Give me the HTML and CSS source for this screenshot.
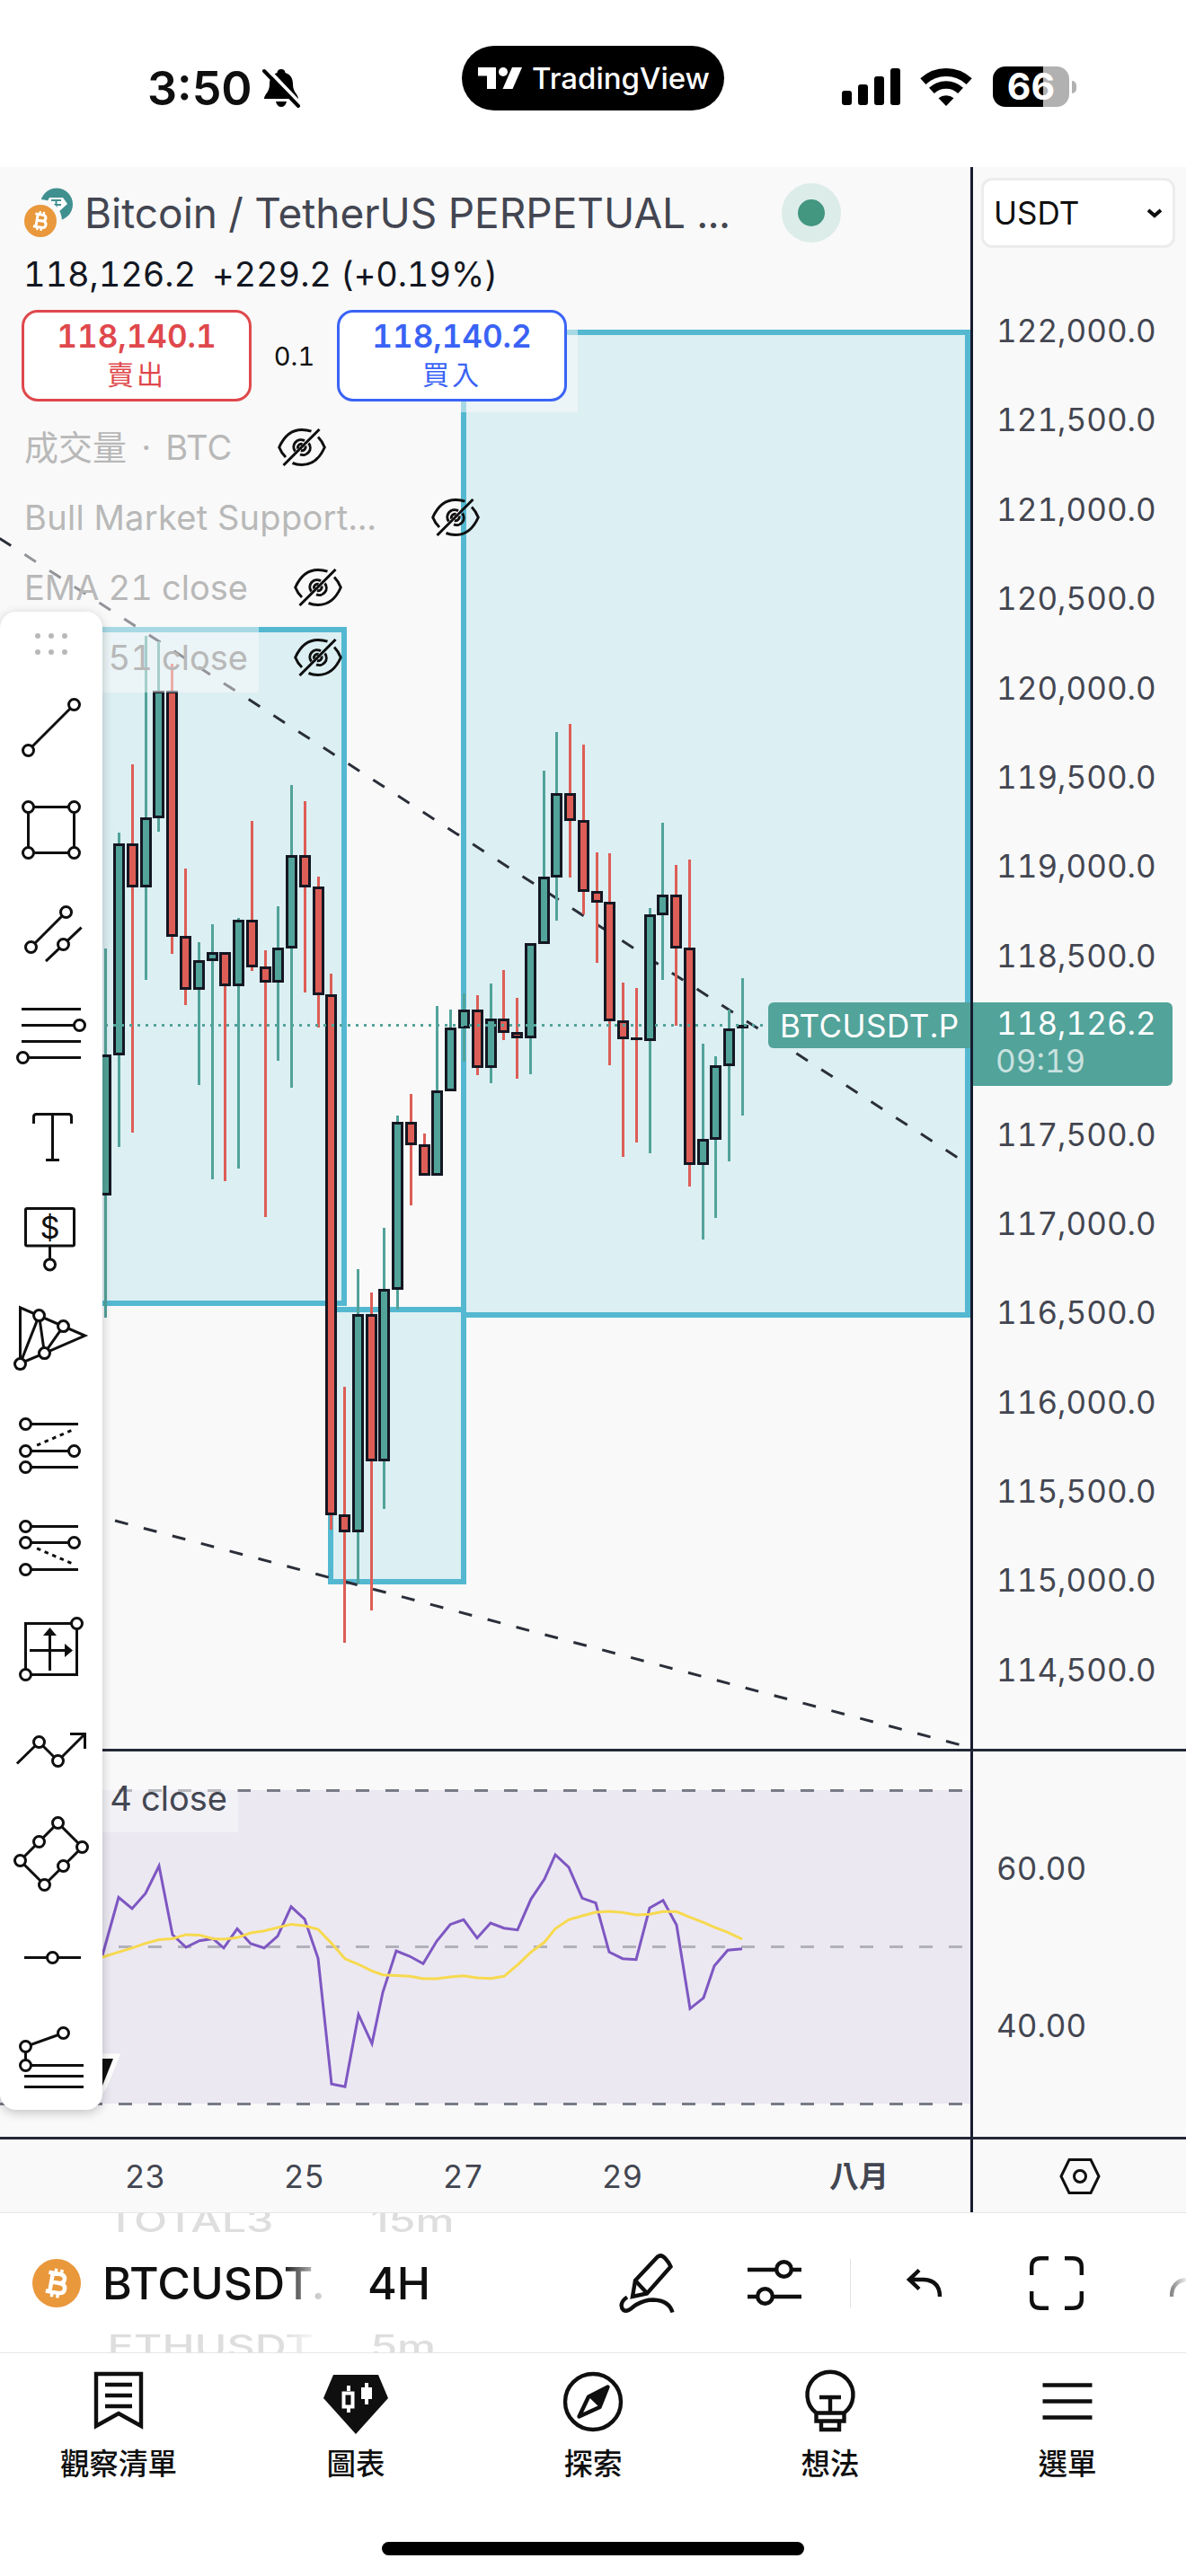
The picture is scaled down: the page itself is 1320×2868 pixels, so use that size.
FILE: index.html
```html
<!DOCTYPE html>
<html lang="zh-Hant">
  <head>
    <meta charset="UTF-8" />
    <meta name="viewport" content="width=device-width, initial-scale=1.0" />
    <title>TradingView - BTCUSDT.P</title>
    <link rel="stylesheet" href="styles.css">
  </head>
  <body>
    <header class="status-bar">
      <div class="status-left">
        <span class="clock">3:50</span>
        <svg class="bell" width="44" height="46" viewBox="0 0 44 46">
          <path d="M21 2c-3 0-4.500 2-4.500 4C10 8 8 13 8 19c0 9-6 11-6 16h38c0-5-6-7-6-16 0-6-2-11-8.500-13 0-2-1.500-4-4.500-4z" />
          <path d="M15 38h12c-1 4-3 6-6 6s-5-2-6-6z" />
          <path class="bell-gap" d="M5 1l38 40" />
          <path class="bell-slash" d="M2 4l38 39" />
        </svg>
      </div>
      <div class="island">
        <svg width="50" height="24" viewBox="0 0 50 24" fill="#fff">
          <path d="M0 0h20v24H10V9.500H0z" />
          <circle cx="28" cy="5" r="5" />
          <path d="M38 0h11L38.500 24h-11z" />
        </svg>
        <span>TradingView</span>
      </div>
      <div class="status-right">
        <svg width="66" height="42" viewBox="0 0 66 42">
          <rect x="0" y="25" width="11" height="16" rx="3" />
          <rect x="18" y="18" width="11" height="23" rx="3" />
          <rect x="36" y="9" width="11" height="32" rx="3" />
          <rect x="54" y="0" width="11" height="41" rx="3" />
        </svg>
        <svg class="wifi" width="58" height="42" viewBox="0 0 58 42">
          <path d="M3.400 14.600A37.500 37.500 0 0 1 54.600 14.600" stroke-width="9" />
          <path d="M12.900 24.900A23.500 23.500 0 0 1 45.100 24.900" stroke-width="8.500" />
          <path class="wifi-dot" d="M29 42L20.500 33.200A13.500 13.500 0 0 1 37.500 33.200z" />
        </svg>
        <div class="battery"><span>66</span></div>
      </div>
    </header>

    <main class="chart">
      <section class="pane price-pane">
        <svg id="price" width="1080" height="1761" viewBox="0 186 1080 1761">
          <rect class="zone" x="3" y="701" width="380" height="750" />
          <rect class="zone" x="368" y="1458" width="148" height="303" />
          <rect class="zone" x="516" y="370" width="561" height="1094" />
          <path class="trend" d="M-0.400 599.400L1070 1291.500" />
          <path class="trend" d="M128 1693L1070 1943" />
          <g id="candles"></g>
          <path class="last-price" d="M0 1141.500H850" />
        </svg>
        <div class="legend">
          <div class="symbol-row">
            <svg width="56" height="56" viewBox="0 0 56 56">
              <circle cx="37" cy="18.500" r="18" fill="#419090" />
              <path d="M29 11h15l5 7-12 11-12-11z" fill="#fff" />
              <path d="M31 14h11M36.500 14v10M31 19h11" stroke="#419090" stroke-width="2" />
              <circle cx="19" cy="37" r="24" fill="#f9f9f9" />
              <use href="#btc" x="1" y="19" width="36" height="36" />
            </svg>
            <h1>Bitcoin / TetherUS PERPETUAL ...</h1>
            <i class="market-open"></i>
          </div>
          <div class="quote-row"><span>118,126.2</span><span>+229.2 (+0.19%)</span></div>
          <div class="trade-row">
            <button class="trade sell"><b>118,140.1</b><span>賣出</span></button>
            <span class="spread">0.1</span>
            <button class="trade buy"><b>118,140.2</b><span>買入</span></button>
          </div>
          <div class="study"><span class="study-name vol">成交量 · BTC</span><svg class="eye"><use href="#eye" /></svg></div>
          <div class="study"><span class="study-name bull">Bull Market Support...</span><svg class="eye"><use href="#eye" /></svg></div>
          <div class="study"><span class="study-name">EMA 21 close</span><svg class="eye"><use href="#eye" /></svg></div>
          <div class="study"><span class="study-name">EMA 51 close</span><svg class="eye"><use href="#eye" /></svg></div>
        </div>
        <span class="symbol-tag">BTCUSDT.P</span>
      </section>

      <aside class="axis price-axis">
        <div class="currency">
          <span>USDT</span>
          <svg width="18" height="11" viewBox="0 0 18 11"><path d="M2 2l7 6 7-6" /></svg>
        </div>
        <ul class="scale">
          <li>122,000.0</li>
          <li>121,500.0</li>
          <li>121,000.0</li>
          <li>120,500.0</li>
          <li>120,000.0</li>
          <li>119,500.0</li>
          <li>119,000.0</li>
          <li>118,500.0</li>
          <li></li>
          <li>117,500.0</li>
          <li>117,000.0</li>
          <li>116,500.0</li>
          <li>116,000.0</li>
          <li>115,500.0</li>
          <li>115,000.0</li>
          <li>114,500.0</li>
        </ul>
        <div class="price-tag"><span>118,126.2</span><span class="countdown">09:19</span></div>
      </aside>

      <section class="pane rsi-pane">
        <svg width="1080" height="429" viewBox="0 1950 1080 429">
          <rect x="0" y="1993" width="1080" height="349" fill="#ebe8f2" />
          <path class="band" d="M0 1993.500H1080M0 2342.500H1080" />
          <path class="band mid" d="M0 2167.500H1080" />
          <polyline class="rsi" points="114,2177 132,2112.500 147,2125 162,2108 177,2077.500 192,2154 207,2168 222,2160.700 237,2158.400 249,2168.800 264,2147.500 279,2164 294,2168.800 309,2155.600 324,2122.800 339,2136.600 354,2180.300 369,2320.300 384,2323.200 399,2242.800 414,2275.300 426,2218.300 441,2172 456,2178 471,2186.300 486,2161.300 501,2142.700 516,2137.300 531,2157.700 546,2141 561,2146.700 576,2148.700 591,2114.300 606,2092 618,2065 633,2079 648,2113.300 663,2118.700 678,2173.300 693,2180.700 708,2181.700 723,2124.300 738,2115.700 753,2143.300 768,2236.300 783,2224.300 795,2188.700 810,2171.300 826,2169.700" />
          <polyline class="rsi-ma" points="114,2179 132,2173.400 147,2168.800 162,2163.600 177,2159.600 192,2158.500 207,2153.900 222,2154.400 237,2158.400 249,2159 264,2157.300 279,2152 294,2149.800 324,2142.400 339,2144 354,2148 369,2163.600 384,2180.800 399,2187 414,2194.300 426,2198.700 456,2200.300 471,2203 486,2203 501,2201 516,2199.700 531,2202 546,2202.700 561,2200.300 576,2187.700 591,2173.300 606,2162.300 618,2147.300 633,2137.300 648,2133 663,2129 678,2128 693,2129.300 708,2132 723,2131.300 738,2128.300 753,2128.300 768,2134.700 783,2140.300 795,2145.700 810,2151.300 826,2159" />
          <path d="M90 2292h36l-12 30-14 18z" fill="#0f0f0f" stroke="#fcfcfc" stroke-width="11" paint-order="stroke" />
        </svg>
        <span class="rsi-name"><span class="rsi-label">RSI 1</span>4 close</span>
      </section>
      <aside class="axis rsi-axis"><span>60.00</span><span>40.00</span></aside>

      <div class="time-axis">
        <span>23</span><span>25</span><span>27</span><span>29</span><b>八月</b>
      </div>
      <div class="axis-settings">
        <svg width="48" height="44" viewBox="0 0 48 44">
          <path d="M12 3.500h24L45 22l-9 18.500H12L3 22z" />
          <circle cx="24" cy="22" r="6.500" />
        </svg>
      </div>

      <nav class="draw-tools">
        <div class="handle"><i></i><i></i><i></i><i></i><i></i><i></i></div>
        <svg viewBox="0 0 28 28"><path d="M7 21L21 7" /><circle cx="5.500" cy="22.500" r="2" /><circle cx="22.500" cy="5.500" r="2" /></svg>
        <svg viewBox="0 0 28 28"><path d="M5.500 5.500h17v17h-17z" /><circle cx="5.500" cy="5.500" r="2" /><circle cx="22.500" cy="5.500" r="2" /><circle cx="5.500" cy="22.500" r="2" /><circle cx="22.500" cy="22.500" r="2" /></svg>
        <svg viewBox="0 0 28 28"><path d="M6.500 19.500l13-13M12 24.700l13.200-12.500" /><circle cx="6.500" cy="19.500" r="2" /><circle cx="19.500" cy="6.500" r="2" /><circle cx="18.500" cy="18.500" r="2" /></svg>
        <svg viewBox="0 0 28 28"><path d="M3 4.500h22M3 10.500h20M3 16.500h22M4 22.500h21" /><circle cx="24.500" cy="10.500" r="2" /><circle cx="3.500" cy="22.500" r="2" /></svg>
        <svg viewBox="0 0 28 28"><path d="M7.500 9V6.500q0-1 1-1h12q1 0 1 1V9M14.500 5.500v17M12 22.500h5" /></svg>
        <svg viewBox="0 0 28 28"><rect x="4.500" y="2.500" width="18" height="13.800" rx=".5" /><path d="M13.500 16.500v5" /><text x="13.500" y="13.700">$</text><circle cx="13.500" cy="23.300" r="2" /></svg>
        <svg viewBox="0 0 28 28"><path d="M2.500 22V1.300L26.500 11.700 11.500 18.200 2.500 22 9.500 4.200l2 14 7-10" /><circle cx="9.500" cy="4.200" r="2" /><circle cx="18.500" cy="8.200" r="2" /><circle cx="11.500" cy="18.200" r="2" /><circle cx="2.500" cy="22.200" r="2" /></svg>
        <svg viewBox="0 0 28 28"><path d="M4.500 6.500H24M4.500 16.500h18M4.500 22.500H24" /><path class="dots" d="M8.700 14.400l13.800-6" /><circle cx="4.500" cy="6.500" r="2" /><circle cx="4.500" cy="16.500" r="2" /><circle cx="4.500" cy="22.500" r="2" /><circle cx="22.500" cy="16.500" r="2" /></svg>
        <svg viewBox="0 0 28 28"><path d="M4.500 6.500H24M4.500 12.500h18M4.500 22.500H24" /><path class="dots" d="M8.700 14.600l13.800 6" /><circle cx="4.500" cy="6.500" r="2" /><circle cx="4.500" cy="12.500" r="2" /><circle cx="4.500" cy="22.500" r="2" /><circle cx="22.500" cy="12.500" r="2" /></svg>
        <svg viewBox="0 0 28 28"><path d="M4.500 4.500h19v19h-19zM6 14.500h14M13.500 22V8" /><path class="solid" d="M11 9l2.500-3L16 9zM19 12l3 2.500-3 2.500z" /><circle cx="23.500" cy="4.500" r="2" /><circle cx="4.500" cy="23.500" r="2" /></svg>
        <svg viewBox="0 0 28 28"><path d="M1.300 18.500l8.200-8 7 7L26.500 7.500M21 7.500h5.500V13" /><circle cx="9.500" cy="10.500" r="2" /><circle cx="16.500" cy="17.500" r="2" /></svg>
        <svg viewBox="0 0 28 28"><path d="M16.500 2.500l-14 14 9 9 14-14z" /><circle cx="16.500" cy="2.500" r="2" /><circle cx="9.500" cy="9.500" r="2" /><circle cx="2.500" cy="16.500" r="2" /><circle cx="11.500" cy="25.500" r="2" /><circle cx="18.500" cy="18.500" r="2" /><circle cx="25.500" cy="11.500" r="2" /></svg>
        <svg viewBox="0 0 28 28"><path d="M4 14.500h21" /><circle cx="14.500" cy="14.500" r="2" /></svg>
        <svg viewBox="0 0 28 28"><path d="M18.500 4.500l-14 5v7H26M4 20.500h22M4 24.500h22" /><circle cx="18.500" cy="4.500" r="2" /><circle cx="4.500" cy="9.500" r="2" /><circle cx="4.500" cy="16.500" r="2" /></svg>
      </nav>
    </main>

    <div class="toolbar">
      <svg class="coin" width="54" height="54"><use href="#btc" /></svg>
      <div class="wheel symbols"><span class="off">TOTAL3</span><span class="on">BTCUSDT.</span><span class="off">ETHUSDT</span></div>
      <div class="wheel intervals"><span class="off">15m</span><span class="on">4H</span><span class="off">5m</span></div>
      <svg class="icon" width="62" height="68" viewBox="0 0 62 68">
        <path d="M15 49l3-18L43 4.500q4-3 8.500 2t6 9L31 45.500z" />
        <path d="M18 31l13 14" />
        <path d="M9 49.500c-7 4.500-8 11-4 14.500 5 3 9-3 14-6 7-4 13-5.500 19-5.500 11 .5 19 5 21.500 14" />
      </svg>
      <svg class="icon sliders" width="60" height="54" viewBox="0 0 60 54">
        <path d="M0 12h32M49 12h11M0 42h11M28 42h32" />
        <circle cx="40.500" cy="11.500" r="8.300" />
        <circle cx="19.500" cy="41.500" r="8.300" />
      </svg>
      <i class="divider"></i>
      <svg class="icon undo" width="40" height="32" viewBox="0 0 40 32">
        <path d="M14 1.500L3 12l11 10.500M3 12h16q18 1 18 19" />
      </svg>
      <svg class="icon full" width="60" height="60" viewBox="0 0 60 60">
        <path d="M2.200 21V12q0-9.800 9.800-9.800h9M39 2.200h9q9.800 0 9.800 9.800v9M57.800 39v9q0 9.800-9.800 9.800h-9M21 57.800h-9q-9.800 0-9.800-9.800v-9" />
      </svg>
      <svg class="icon redo" width="18" height="32" viewBox="0 0 18 32">
        <linearGradient id="fade"><stop offset="0" stop-color="#888" /><stop offset="1" stop-color="#eee" /></linearGradient>
        <path d="M2 31q0-17 16-19" stroke="url(#fade)" />
      </svg>
    </div>

    <footer class="tabs">
      <a>
        <svg viewBox="0 0 72 72"><path d="M11 5h50v58L36 49 11 63zM21 17h30M21 29h30M21 41h30" /></svg>
        觀察清單
      </a>
      <a>
        <svg viewBox="0 0 72 72"><path class="solid" d="M11 6h50l11 26-36 40L0 32z" /><path class="candle" d="M28 18v6M28 42v6M22.500 26.500h10v15h-10zM48 15v24" /><path class="candle-full" d="M42 20h12v13H42z" /></svg>
        圖表
      </a>
      <a>
        <svg viewBox="0 0 72 72"><circle cx="36" cy="36" r="31" /><path d="M52.500 19.500L31 30.500 20.500 52.500 43.500 42z" stroke-linejoin="round" /><path class="solid" d="M54 18L30 29.500l14.500 14z" /></svg>
        探索
      </a>
      <a>
        <svg viewBox="0 0 72 72"><path d="M20.500 48.500A25.500 25.500 0 1 1 51.500 48.500M20.500 48.500h31v9h-31zM26 57.500h20v9.500H26zM24 31h24M36 31v17" /></svg>
        想法
      </a>
      <a>
        <svg viewBox="0 0 72 72"><path d="M8.500 17.500h55M8.500 35.500h55M8.500 53.500h55" /></svg>
        選單
      </a>
      <div class="home-bar"></div>
    </footer>

    <svg width="0" height="0" class="defs">
      <symbol id="btc" viewBox="0 0 54 54">
        <circle cx="27" cy="27" r="27" fill="#e9983c" />
        <g transform="rotate(10 27 27)" fill="none" stroke="#fff" stroke-width="4.500">
          <path d="M16.500 16.500H29q6 0 6 5t-6 5h-8.500H30q7 0 7 5.500T30 37.500H16.500M21 17v20" />
          <path d="M24 11v6M30.500 11v6M24 37v6M30.500 37v6" stroke-width="3.500" />
        </g>
      </symbol>
      <symbol id="eye" viewBox="0 0 54 42">
        <g fill="none" stroke="#0f0f0f" stroke-width="3">
          <path d="M37.500 3.200C34 2 31 1.500 27 1.500 15 1.500 7 9 1.700 21 3.500 25.500 5.800 29 9 32" />
          <path d="M45 9.500C48 12.500 50.500 16.500 52.300 21 47 33 39 40.500 27 40.500 23 40.500 20 40 16.500 38.500" />
          <path d="M19.500 25.500A8 8 0 0 1 30 13.800" />
          <path d="M34.500 16.500A8 8 0 0 1 25 28.800" />
          <path d="M22.500 22.500a4 4 0 0 1 5-5M31 19.500a4 4 0 0 1-5 5" />
          <path d="M6.500 41L46.500 1" />
        </g>
      </symbol>
    </svg>

    <script>
      // x, high, body top, body bottom, low, up
      const candles = [
        [117.5, 1056, 1174, 1331, 1467, 1],
        [132.5, 927, 939, 1175, 1277, 1],
        [147.5, 851, 939, 988, 1261, 0],
        [162.5, 708, 910, 988, 1091, 1],
        [176.5, 714, 769, 911, 926, 1],
        [191.5, 739, 769, 1043, 1062, 0],
        [206.5, 967, 1042, 1102, 1119, 0],
        [221.5, 1049, 1069, 1102, 1208, 1],
        [236.5, 1029, 1060, 1070, 1313, 1],
        [250.5, 1060, 1060, 1098, 1315, 0],
        [265.5, 1022, 1024, 1098, 1301, 1],
        [280.5, 914, 1024, 1077, 1081, 0],
        [295.5, 1058, 1076, 1094, 1355, 0],
        [309.5, 1009, 1055, 1094, 1181, 1],
        [324.5, 874, 952, 1056, 1211, 1],
        [339.5, 892, 952, 988, 1105, 0],
        [354.5, 976, 987, 1108, 1144, 0],
        [368.5, 1084, 1107, 1687, 1703, 0],
        [383.5, 1544, 1686, 1706, 1829, 0],
        [398.5, 1413, 1463, 1706, 1763, 1],
        [413.5, 1439, 1463, 1627, 1793, 0],
        [427.5, 1367, 1435, 1627, 1680, 1],
        [442.5, 1242, 1249, 1436, 1458, 1],
        [457.5, 1218, 1249, 1275, 1342, 0],
        [472.5, 1262, 1274, 1309, 1309, 0],
        [486.5, 1120, 1214, 1309, 1309, 1],
        [501.5, 1124, 1144, 1215, 1215, 1],
        [516.5, 1106, 1124, 1145, 1182, 1],
        [531.5, 1108, 1124, 1189, 1197, 0],
        [546.5, 1095, 1134, 1189, 1206, 1],
        [560.5, 1080, 1134, 1150, 1158, 0],
        [575.5, 1111, 1149, 1156, 1201, 0],
        [590.5, 1050, 1050, 1156, 1196, 1],
        [605.5, 858, 976, 1051, 1051, 1],
        [619.5, 815, 883, 977, 1025, 1],
        [634.5, 806, 883, 914, 977, 0],
        [649.5, 829, 913, 993, 1018, 0],
        [664.5, 949, 992, 1005, 1072, 0],
        [678.5, 950, 1004, 1137, 1186, 0],
        [693.5, 1094, 1136, 1157, 1288, 0],
        [708.5, 1100, 1155, 1158, 1272, 0],
        [723.5, 1011, 1018, 1159, 1284, 1],
        [737.5, 916, 996, 1019, 1091, 1],
        [752.5, 963, 996, 1056, 1142, 0],
        [767.5, 957, 1055, 1297, 1321, 0],
        [782.5, 1162, 1268, 1297, 1380, 1],
        [796.5, 1176, 1186, 1269, 1356, 1],
        [811.5, 1124, 1145, 1187, 1293, 1],
        [826.5, 1089, 1141, 1145, 1242, 1],
      ];

      let html = "";
      candles.forEach(([x, high, top, bottom, low, up]) => {
        const color = up ? "#52a39a" : "#dd5e56";
        html += `<rect x="${x - 1.5}" y="${high}" width="3" height="${low - high}" fill="${color}"/>`;
        html += `<rect x="${x - 6.5}" y="${top}" width="13" height="${bottom - top}" fill="#141722"/>`;
        if (bottom - top > 5) {
          html += `<rect x="${x - 3.5}" y="${top + 3}" width="7" height="${bottom - top - 6}" fill="${color}"/>`;
        }
      });
      document.getElementById("candles").innerHTML = html;
    </script>
  </body>
</html>
```
FILE: styles.css
```css
* {
  box-sizing: border-box;
}

body {
  margin: 0;
  width: 1320px;
  height: 2868px;
  overflow: hidden;
  background-color: #fff;
  color: #0f0f0f;
  font-family: Inter, "Noto Sans CJK TC", sans-serif;
}

svg {
  display: block;
  flex-shrink: 0;
}

.defs {
  position: absolute;
}

/* status bar */
.status-bar {
  display: grid;
  grid-template-columns: 514px 292px 514px;
  height: 186px;
  padding-top: 51px;
}

.status-left {
  display: flex;
  align-items: center;
  height: 94px;
  padding-left: 164px;
}

.clock {
  width: 128px;
  font-size: 52px;
  font-weight: 600;
}

.bell-gap {
  stroke: #fff;
  stroke-width: 4;
}

.bell-slash {
  stroke: #000;
  stroke-width: 4;
  stroke-linecap: round;
}

.island {
  display: flex;
  align-items: center;
  gap: 10px;
  height: 72px;
  padding-left: 18px;
  border-radius: 36px;
  background-color: #000;
  color: #fff;
  font-size: 33px;
  font-weight: 500;
}

.status-right {
  display: flex;
  align-items: center;
  height: 91px;
  padding-left: 131px;
}

.wifi {
  margin-left: 21px;
  fill: none;
  stroke: #000;
}

.wifi .wifi-dot {
  fill: #000;
  stroke: none;
}

.battery {
  position: relative;
  width: 85px;
  height: 45px;
  margin-left: 23px;
  border-radius: 14px;
  background: linear-gradient(to right, #000 56px, #b1b1b1 56px);
  color: #fff;
  font-size: 41px;
  font-weight: 700;
  line-height: 45px;
  text-align: center;
}

.battery::after {
  content: "";
  position: absolute;
  right: -8px;
  top: 16px;
  width: 5px;
  height: 14px;
  border-radius: 0 5px 5px 0;
  background-color: #b1b1b1;
}

/* chart */
.chart {
  position: relative;
  display: grid;
  grid-template-columns: 1080px 240px;
  grid-template-rows: 1764px 432px 81px;
  background-color: #f9f9f9;
  color: #434651;
  font-size: 35px;
  font-variant-numeric: tabular-nums;
}

.pane {
  position: relative;
  border-bottom: 3px solid #242838;
}

.zone {
  fill: #dceff3;
  stroke: #54b8d1;
  stroke-width: 6;
}

.trend {
  stroke: #2a2e39;
  stroke-width: 3;
  stroke-dasharray: 15 18;
}

.last-price {
  stroke: #52a39a;
  stroke-width: 3;
  stroke-dasharray: 3 6;
}

.legend {
  position: absolute;
  left: 15px;
  top: 0;
}

.symbol-row {
  display: flex;
  align-items: center;
  height: 102px;
  padding-left: 11px;
}

.symbol-row h1 {
  width: 776px;
  margin: 0 0 0 12px;
  font-size: 46px;
  font-weight: 400;
  white-space: nowrap;
}

.market-open {
  width: 66px;
  height: 66px;
  border: 18px solid #dcece9;
  border-radius: 50%;
  background-color: #439680;
}

.quote-row {
  display: flex;
  gap: 18px;
  height: 45px;
  padding-left: 11px;
  color: #131722;
  font-size: 38px;
  letter-spacing: -0.1px;
  line-height: 34px;
}

.trade-row {
  display: flex;
  align-items: center;
  width: 628px;
  height: 126px;
  padding-left: 9px;
  background-color: rgba(249, 249, 249, 0.5);
}

.trade {
  display: flex;
  flex-direction: column;
  align-items: center;
  width: 256px;
  height: 102px;
  padding: 4px 0 0;
  border: 3px solid;
  border-radius: 18px;
  background-color: #fff;
  font-family: inherit;
  font-variant-numeric: tabular-nums;
}

.trade b {
  font-size: 35px;
  font-weight: 600;
  line-height: 44px;
}

.trade span {
  font-size: 30px;
  line-height: 42px;
  letter-spacing: 3px;
}

.sell {
  color: #df484c;
}

.buy {
  color: #3a63f5;
}

.spread {
  width: 95px;
  color: #0f0f0f;
  font-size: 29px;
  text-align: center;
}

.study {
  display: flex;
  align-items: center;
  height: 78px;
}

.study-name {
  width: 273px;
  padding-left: 12px;
  background-color: rgba(249, 249, 249, 0.5);
  color: #b8b8b8;
  font-size: 38px;
  line-height: 78px;
  white-space: nowrap;
}

.study-name.vol {
  width: 255px;
  word-spacing: 6px;
}

.study-name.bull {
  width: 426px;
  letter-spacing: 0.3px;
}

.eye {
  width: 54px;
  height: 42px;
  margin-left: 39px;
}

.symbol-tag {
  position: absolute;
  right: 0;
  top: 930px;
  width: 225px;
  height: 51px;
  padding-left: 13px;
  border-radius: 6px 0 0 6px;
  background-color: #52a39a;
  color: #fff;
  line-height: 52px;
  letter-spacing: 0.5px;
}

.axis {
  position: relative;
  border-left: 3px solid #181c30;
  border-bottom: 3px solid #242838;
}

.currency {
  display: flex;
  align-items: center;
  justify-content: space-between;
  width: 216px;
  height: 78px;
  margin: 12px 0 43px 9px;
  padding: 0 11px;
  border: 3px solid #ececec;
  border-radius: 12px;
  background-color: #fff;
  color: #0f0f0f;
}

.currency svg {
  fill: none;
  stroke: #0f0f0f;
  stroke-width: 4;
}

.scale {
  margin: 0;
  padding: 0 0 0 26px;
  list-style: none;
}

.scale li {
  height: 99.4px;
  line-height: 99.4px;
}

.price-tag {
  position: absolute;
  left: 0;
  top: 930px;
  display: flex;
  flex-direction: column;
  width: 222px;
  height: 93px;
  padding: 3px 0 0 26px;
  border-radius: 0 6px 6px 0;
  background-color: #52a39a;
  color: #fff;
  line-height: 41.5px;
}

.countdown {
  margin-left: -1px;
  color: rgba(255, 255, 255, 0.7);
}

.band {
  stroke: #787b86;
  stroke-width: 3;
  stroke-dasharray: 15 18;
}

.band.mid {
  opacity: 0.5;
}

.rsi,
.rsi-ma {
  fill: none;
  stroke: #7e57c2;
  stroke-width: 3;
}

.rsi-ma {
  stroke: #f7d94f;
}

.rsi-name {
  position: absolute;
  left: 0;
  top: 14px;
  width: 265px;
  height: 76px;
  padding-right: 12px;
  background-color: rgba(249, 249, 249, 0.5);
  font-size: 38px;
  line-height: 76px;
  text-align: right;
}

.rsi-label {
  margin-right: 8px;
}

.rsi-axis {
  display: flex;
  flex-direction: column;
  padding: 43px 0 0 26px;
  line-height: 174.5px;
}

.time-axis {
  display: flex;
  min-width: 0;
  padding-left: 73px;
  line-height: 82px;
  text-align: center;
}

.time-axis span {
  flex: 0 0 177px;
}

.time-axis b {
  flex: 0 0 350px;
  font-size: 33px;
  font-weight: 600;
}

.axis-settings {
  display: flex;
  align-items: center;
  justify-content: center;
  border-left: 3px solid #181c30;
}

.axis-settings svg {
  fill: none;
  stroke: #0f0f0f;
  stroke-width: 3;
}

/* drawing tools */
.draw-tools {
  position: absolute;
  left: 0;
  top: 495px;
  display: flex;
  flex-direction: column;
  align-items: center;
  width: 114px;
  height: 1668px;
  border-radius: 18px;
  background-color: #fff;
  box-shadow: 0 3px 12px rgba(0, 0, 0, 0.22);
}

.draw-tools svg {
  width: 84px;
  height: 84px;
  margin: 15px 0;
  fill: #fff;
  stroke: #0f0f0f;
  overflow: visible;
}

.draw-tools path {
  fill: none;
}

.draw-tools .solid {
  fill: #0f0f0f;
  stroke: none;
}

.draw-tools .dots {
  stroke-dasharray: 1.5 1.6;
}

.draw-tools text {
  fill: #0f0f0f;
  stroke: none;
  font-size: 11.5px;
  text-anchor: middle;
}

.handle {
  display: grid;
  grid-template-columns: repeat(3, 6px);
  gap: 12px 9px;
  align-content: center;
  height: 72px;
  flex-shrink: 0;
}

.handle i {
  width: 6px;
  height: 6px;
  border-radius: 50%;
  background-color: #b8b8b8;
}

/* bottom toolbar */
.toolbar {
  display: flex;
  align-items: center;
  height: 156px;
  padding-left: 36px;
  border-top: 1px solid #e6e6e6;
  overflow: hidden;
}

.icon {
  fill: none;
  stroke: #0f0f0f;
  stroke-width: 4.4;
}

.wheel {
  display: flex;
  flex-direction: column;
  align-items: flex-start;
  justify-content: center;
  gap: 10px;
  font-size: 50px;
  font-weight: 500;
  line-height: 60px;
}

.wheel .off {
  margin-left: 2px;
  color: #dedede;
  transform: scale(0.97, 0.7);
}

.symbols {
  width: 270px;
  margin-left: 24px;
  -webkit-mask-image: linear-gradient(to right, #000 200px, rgba(0, 0, 0, 0.2) 240px);
  mask-image: linear-gradient(to right, #000 200px, rgba(0, 0, 0, 0.2) 240px);
}

.intervals {
  width: 280px;
  margin-left: 25px;
}

.sliders {
  margin-left: 81px;
}

.divider {
  width: 1px;
  height: 54px;
  margin: 0 62px 0 54px;
  background-color: #e3e3e3;
}

.full {
  margin-left: 97px;
}

.redo {
  margin-left: 96px;
}

/* tabs */
.tabs {
  display: grid;
  grid-template-columns: repeat(5, 264px);
  grid-template-rows: 210px 15px;
  height: 249px;
  border-top: 1px solid #e6e6e6;
}

.tabs a {
  display: flex;
  flex-direction: column;
  align-items: center;
  padding-top: 18px;
  font-size: 32.5px;
  font-weight: 500;
  line-height: 67px;
}

.tabs svg {
  width: 72px;
  height: 72px;
  fill: none;
  stroke: #0f0f0f;
  stroke-width: 4.4;
}

.tabs .solid {
  fill: #0f0f0f;
  stroke: none;
}

.tabs .candle {
  stroke: #fff;
  stroke-width: 4;
}

.tabs .candle-full {
  fill: #fff;
  stroke: none;
}

.home-bar {
  grid-column: 1 / -1;
  justify-self: center;
  width: 470px;
  height: 15px;
  border-radius: 8px;
  background-color: #000;
}
```
